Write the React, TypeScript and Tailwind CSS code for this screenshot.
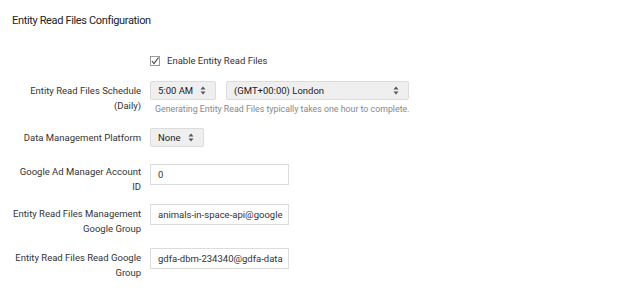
import React from "react";

function Arrows() {
  return (
    <svg width="6" height="9" viewBox="0 0 6 9" className="shrink-0">
      <path d="M3 0.5 L5.5 3.5 H0.5 Z" fill="#555" />
      <path d="M3 8.5 L5.5 5.5 H0.5 Z" fill="#555" />
    </svg>
  );
}

function Select({ value, width }: { value: string; width: string }) {
  return (
    <div
      className={`${width} h-[19px] flex items-center justify-between pl-[7px] pr-[9px] bg-[#efefef] border border-[#dcdcdc] rounded-[2px] text-[9.5px] text-[#222]`}
    >
      <span>{value}</span>
      <Arrows />
    </div>
  );
}

function TextBox({ value }: { value: string }) {
  return (
    <div className="w-[139px] h-[21px] flex items-center pl-[7px] border border-[#dcdcdc] bg-white text-[9.5px] text-[#333] overflow-hidden whitespace-nowrap">
      {value}
    </div>
  );
}

function Row({
  label,
  children,
  className = "",
}: {
  label: React.ReactNode;
  children: React.ReactNode;
  className?: string;
}) {
  return (
    <div className={`flex items-start ${className}`}>
      <div className="w-[150px] pr-[9px] text-right text-[9.5px] leading-[15px] text-[#333]">
        {label}
      </div>
      <div className="flex-1">{children}</div>
    </div>
  );
}

export default function App() {
  return (
    <div
      className="w-[624px] h-[297px] bg-white overflow-hidden"
      style={{ fontFamily: "Roboto, 'Liberation Sans', sans-serif" }}
    >
      <h1 className="pl-[12px] pt-[13px] text-[11px] tracking-[-0.35px] leading-[16px] text-[#222]">
        Entity Read Files Configuration
      </h1>

      <div className="mt-[25px] pl-[150px] flex items-center gap-[7px] text-[9.5px] text-[#333]">
        <svg width="10" height="10" viewBox="0 0 10 10">
          <rect x="0.5" y="0.5" width="9" height="9" fill="white" stroke="#9a9a9a" />
          <path d="M2 5 L4 7.5 L8.5 1.5" fill="none" stroke="#444" strokeWidth="1.1" />
        </svg>
        <span>Enable Entity Read Files</span>
      </div>

      <Row className="mt-[13px]" label={<><div className="pt-[2px]">Entity Read Files Schedule</div><div>(Daily)</div></>}>
        <div className="flex gap-[10px]">
          <Select value="5:00 AM" width="w-[66px]" />
          <Select value="(GMT+00:00) London" width="w-[183px]" />
        </div>
        <div className="mt-[3px] pl-[5px] text-[8.8px] text-[#888]">
          Generating Entity Read Files typically takes one hour to complete.
        </div>
      </Row>

      <Row className="mt-[12px]" label={<div className="pt-[2px]">Data Management Platform</div>}>
        <Select value="None" width="w-[54px]" />
      </Row>

      <Row className="mt-[17px]" label={<>Google Ad Manager Account<br />ID</>}>
        <TextBox value="0" />
      </Row>

      <Row className="mt-[10px]" label={<><div className="pt-[2px]">Entity Read Files Management</div><div>Google Group</div></>}>
        <TextBox value="animals-in-space-api@google" />
      </Row>

      <Row className="mt-[12px]" label={<><div className="pt-[2px]">Entity Read Files Read Google</div><div>Group</div></>}>
        <TextBox value="gdfa-dbm-234340@gdfa-data" />
      </Row>
    </div>
  );
}
